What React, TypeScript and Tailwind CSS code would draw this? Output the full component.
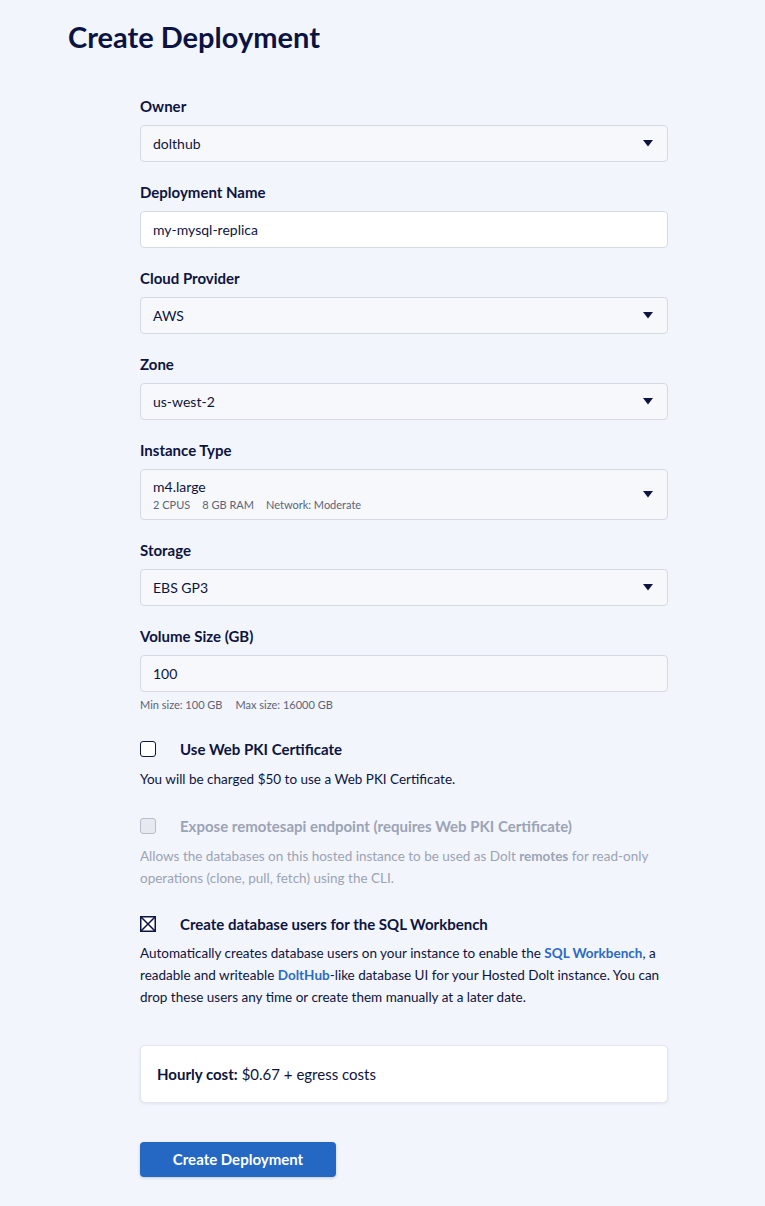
import React from "react";

const Caret = () => (
  <svg width="10" height="7" viewBox="0 0 10 7" className="shrink-0">
    <path d="M0 0 L10 0 L5 6.5 Z" fill="#0d1440" />
  </svg>
);

function Label({ children }: { children: React.ReactNode }) {
  return <div className="mb-[9px] text-[15px] font-bold leading-5 text-[#0d1440]">{children}</div>;
}

function Select({ value }: { value: string }) {
  return (
    <div className="flex h-[37px] items-center justify-between rounded-[4px] border border-[#d5d9e2] bg-[#f6f8fb] pl-3 pr-[14px] text-[14px] text-[#0d1440]">
      <span>{value}</span>
      <Caret />
    </div>
  );
}

function Field({ label, children }: { label: string; children: React.ReactNode }) {
  return (
    <div className="mb-[20px]">
      <Label>{label}</Label>
      {children}
    </div>
  );
}

export default function App() {
  return (
    <div
      className="min-h-[1206px] w-full bg-[#f2f5fc] text-[#0d1440]"
      style={{ fontFamily: "Lato, 'Noto Sans', sans-serif" }}
    >
      <div className="px-[68px] pt-[19px]">
        <h1 className="text-[29px] font-bold leading-[36px] text-[#0b1342]">Create Deployment</h1>
      </div>

      <div className="ml-[140px] mt-[41px] w-[528px]">
        <Field label="Owner">
          <Select value="dolthub" />
        </Field>

        <Field label="Deployment Name">
          <div className="flex h-[37px] items-center rounded-[4px] border border-[#d5d9e2] bg-white px-3 text-[14px]">
            my-mysql-replica
          </div>
        </Field>

        <Field label="Cloud Provider">
          <Select value="AWS" />
        </Field>

        <Field label="Zone">
          <Select value="us-west-2" />
        </Field>

        <Field label="Instance Type">
          <div className="flex h-[51px] items-center justify-between rounded-[4px] border border-[#d5d9e2] bg-[#f6f8fb] pl-3 pr-[14px]">
            <div className="flex flex-col">
              <span className="text-[14px] leading-5">m4.large</span>
              <span className="flex gap-3 text-[11px] leading-4 text-[#5b6478]">
                <span>2 CPUS</span>
                <span>8 GB RAM</span>
                <span>Network: Moderate</span>
              </span>
            </div>
            <Caret />
          </div>
        </Field>

        <Field label="Storage">
          <Select value="EBS GP3" />
        </Field>

        <div className="mb-[26px]">
          <Label>Volume Size (GB)</Label>
          <div className="flex h-[37px] items-center rounded-[4px] border border-[#d5d9e2] bg-[#f6f8fb] px-3 text-[14px]">
            100
          </div>
          <div className="mt-[5px] flex gap-[13px] text-[11px] leading-4 text-[#5b6478]">
            <span>Min size: 100 GB</span>
            <span>Max size: 16000 GB</span>
          </div>
        </div>

        <div className="mb-[26px]">
          <div className="flex items-center">
            <span className="h-4 w-4 rounded-[3px] border-[1.5px] border-[#0d1440] bg-white" />
            <span className="ml-6 text-[15px] font-bold leading-5">Use Web PKI Certificate</span>
          </div>
          <p className="mt-[9px] text-[13.5px] leading-[22px]">
            You will be charged $50 to use a Web PKI Certificate.
          </p>
        </div>

        <div className="mb-[25px] text-[#9ba3b4]">
          <div className="flex items-center">
            <span className="h-4 w-4 rounded-[3px] border-[1.5px] border-[#b7bdc9] bg-[#e6e9ef]" />
            <span className="ml-6 text-[15px] font-bold leading-5">
              Expose remotesapi endpoint (requires Web PKI Certificate)
            </span>
          </div>
          <p className="mt-[9px] text-[13.5px] leading-[22px]">
            Allows the databases on this hosted instance to be used as Dolt <b>remotes</b> for
            read-only operations (clone, pull, fetch) using the CLI.
          </p>
        </div>

        <div className="mb-[37px]">
          <div className="flex items-center">
            <svg width="16" height="16" viewBox="0 0 16 16">
              <rect x="0.75" y="0.75" width="14.5" height="14.5" fill="white" stroke="#0d1440" strokeWidth="1.5" />
              <path d="M1 1 L15 15 M15 1 L1 15" stroke="#0d1440" strokeWidth="1.5" />
            </svg>
            <span className="ml-6 text-[15px] font-bold leading-5">
              Create database users for the SQL Workbench
            </span>
          </div>
          <p className="mt-[8px] text-[13.5px] leading-[22px]">
            Automatically creates database users on your instance to enable the{" "}
            <a className="font-bold text-[#2a6ac4]">SQL Workbench</a>, a readable and writeable{" "}
            <a className="font-bold text-[#2a6ac4]">DoltHub</a>-like database UI for your Hosted
            Dolt instance. You can drop these users any time or create them manually at a later
            date.
          </p>
        </div>

        <div className="flex h-[58px] items-center rounded-[5px] border border-[#e2e6ee] bg-white px-4 text-[15px] shadow-[0_1px_3px_rgba(20,30,70,0.08)]">
          <b className="mr-1">Hourly cost:</b> $0.67 + egress costs
        </div>

        <button className="mt-[39px] h-[35px] w-[196px] rounded-[4px] bg-[#2468c4] text-[15px] font-bold text-white shadow-[0_1px_3px_rgba(20,30,70,0.2)]">
          Create Deployment
        </button>
      </div>
    </div>
  );
}
